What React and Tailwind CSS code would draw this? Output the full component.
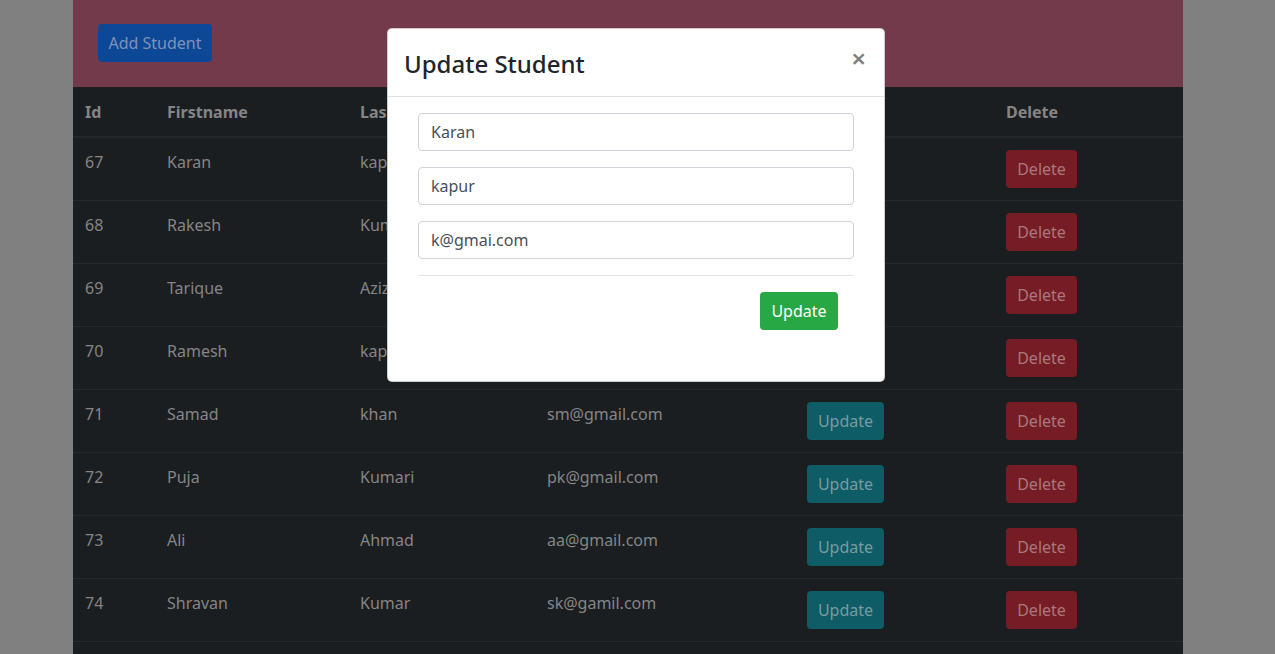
import React from 'react';

const students = [
    { id: 67, first: 'Karan', last: 'kapur', email: 'k@gmai.com' },
    { id: 68, first: 'Rakesh', last: 'Kumar', email: 'rk@gmail.com' },
    { id: 69, first: 'Tarique', last: 'Aziz', email: 'ta@gmail.com' },
    { id: 70, first: 'Ramesh', last: 'kapur', email: 'rm@gmail.com' },
    { id: 71, first: 'Samad', last: 'khan', email: 'sm@gmail.com' },
    { id: 72, first: 'Puja', last: 'Kumari', email: 'pk@gmail.com' },
    { id: 73, first: 'Ali', last: 'Ahmad', email: 'aa@gmail.com' },
    { id: 74, first: 'Shravan', last: 'Kumar', email: 'sk@gamil.com' },
];

const font = { fontFamily: '"Segoe UI", "Noto Sans", "Open Sans", sans-serif' };

const App = () => {
    return (
        <div className="relative h-[654px] overflow-hidden bg-[#808080]" style={font}>
            {/* page behind the backdrop, painted in its dimmed colours */}
            <div className="ml-[73px] w-[1110px]">
                <div className="bg-[#733a4c] pl-[25px] pt-6 pb-[25px]">
                    <button className="h-[38px] w-[114px] rounded bg-[#0c4896] text-[#7f93b8] text-base">
                        Add Student
                    </button>
                </div>

                <table className="w-full table-fixed border-collapse bg-[#1b1e21] text-base text-[#858585]">
                    <colgroup>
                        <col className="w-[82px]" />
                        <col className="w-[193px]" />
                        <col className="w-[187px]" />
                        <col className="w-[260px]" />
                        <col className="w-[199px]" />
                        <col className="w-[189px]" />
                    </colgroup>
                    <thead>
                        <tr className="border-t border-b-2 border-[#1d2023] border-b-[#23272b]">
                            <th className="px-3 py-3 text-left font-bold leading-6">Id</th>
                            <th className="px-3 py-3 text-left font-bold leading-6">Firstname</th>
                            <th className="px-3 py-3 text-left font-bold leading-6">Lastname</th>
                            <th className="px-3 py-3 text-left font-bold leading-6">Email</th>
                            <th className="px-3 py-3 text-left font-bold leading-6">Update</th>
                            <th className="px-3 py-3 text-left font-bold leading-6">Delete</th>
                        </tr>
                    </thead>
                    <tbody>
                        {students.map((s) => (
                            <tr key={s.id} className="border-t border-[#25292d]">
                                <td className="px-3 py-3 align-top leading-6">{s.id}</td>
                                <td className="px-3 py-3 align-top leading-6">{s.first}</td>
                                <td className="px-3 py-3 align-top leading-6">{s.last}</td>
                                <td className="px-3 py-3 align-top leading-6">{s.email}</td>
                                <td className="px-3 py-3 align-top">
                                    <button className="h-[38px] w-[77px] rounded bg-[#0d5c66] text-[#7b9aa0] text-base">
                                        Update
                                    </button>
                                </td>
                                <td className="px-3 py-3 align-top">
                                    <button className="h-[38px] w-[71px] rounded bg-[#761c25] text-[#a8787d] text-base">
                                        Delete
                                    </button>
                                </td>
                            </tr>
                        ))}
                        <tr className="border-t border-[#25292d]">
                            <td colSpan={6} className="h-[62px]"></td>
                        </tr>
                    </tbody>
                </table>
            </div>

            {/* modal */}
            <div className="absolute left-[387px] top-[28px] w-[498px] rounded-[5px] border border-black/20 bg-white">
                <div className="flex items-start justify-between border-b border-[#dee2e6] px-4 pt-[17px] pb-[14px]">
                    <h4 className="text-2xl font-medium leading-9 text-[#212529]">Update Student</h4>
                    <button className="mr-[2px] text-[26px] font-semibold leading-6 text-[#808080]">×</button>
                </div>
                <div className="px-4 pt-4 pb-[51px]">
                    <div className="px-[14px]">
                        {['Karan', 'kapur', 'k@gmai.com'].map((v) => (
                            <input
                                key={v}
                                defaultValue={v}
                                className="mb-4 block h-[38px] w-full rounded border border-[#ced4da] px-3 text-base text-[#495057] outline-none"
                                style={font}
                            />
                        ))}
                        <hr className="border-t border-[#e5e5e5]" />
                        <div className="mt-4 flex justify-end pr-4">
                            <button className="h-[38px] w-[78px] rounded bg-[#28a745] text-base text-white">
                                Update
                            </button>
                        </div>
                    </div>
                </div>
            </div>
        </div>
    );
};

export default App;
